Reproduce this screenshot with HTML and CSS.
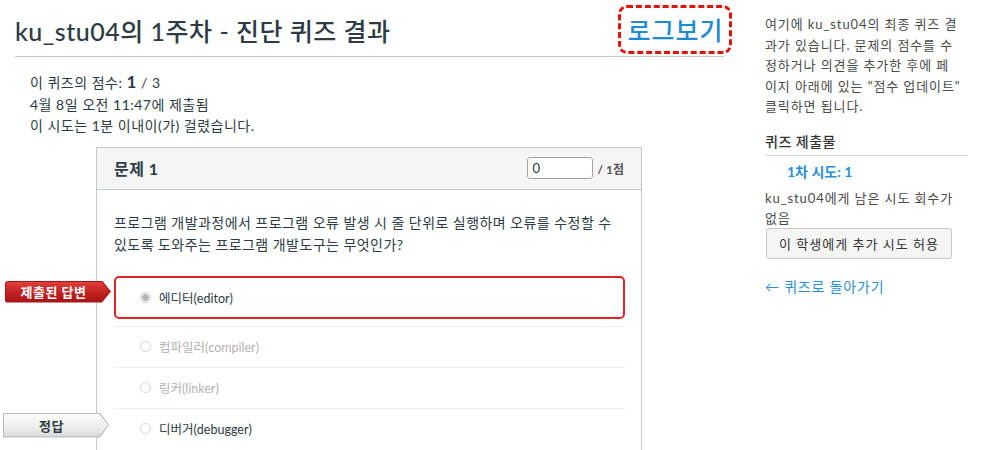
FILE: index.html
```html
<!DOCTYPE html>
<html lang="ko">
<head>
<meta charset="utf-8">
<title>퀴즈 결과</title>
<link rel="stylesheet" href="styles.css">
</head>
<body>
<div class="page">
  <main class="content">
    <header class="page-head">
      <h1 class="page-title">ku_stu04의 1주차 - 진단 퀴즈 결과</h1>
      <a class="log-link" href="#">로그보기</a>
    </header>

    <div class="quiz-info">
      <div>이 퀴즈의 점수: <b class="score">1</b> / 3</div>
      <div>4월 8일 오전 11:47에 제출됨</div>
      <div>이 시도는 1분 이내이(가) 걸렸습니다.</div>
    </div>

    <section class="question">
      <div class="q-head">
        <span class="q-title">문제 1</span>
        <span class="q-points"><input class="q-input" type="text" value="0"> <span class="q-max">/ 1점</span></span>
      </div>
      <div class="q-body">
        <p class="q-text">프로그램 개발과정에서 프로그램 오류 발생 시 줄 단위로 실행하며 오류를 수정할 수 있도록 도와주는 프로그램 개발도구는 무엇인가?</p>
        <div class="answers">
          <div class="answer answer-selected">
            <span class="tab tab-red"><span class="tab-inner">제출된 답변</span></span>
            <span class="radio radio-checked"></span>
            <span class="answer-text">에디터(editor)</span>
          </div>
          <div class="answer answer-muted">
            <span class="radio"></span>
            <span class="answer-text">컴파일러(compiler)</span>
          </div>
          <div class="answer answer-muted">
            <span class="radio"></span>
            <span class="answer-text">링커(linker)</span>
          </div>
          <div class="answer">
            <span class="tab tab-gray"><span class="tab-inner">정답</span></span>
            <span class="radio"></span>
            <span class="answer-text">디버거(debugger)</span>
          </div>
        </div>
      </div>
    </section>
  </main>

  <aside class="sidebar">
    <p class="side-intro">여기에 ku_stu04의 최종 퀴즈 결과가 있습니다. 문제의 점수를 수정하거나 의견을 추가한 후에 페이지 아래에 있는 "점수 업데이트" 클릭하면 됩니다.</p>
    <h2 class="side-heading">퀴즈 제출물</h2>
    <a class="attempt-link" href="#">1차 시도: 1</a>
    <p class="side-note">ku_stu04에게 남은 시도 회수가 없음</p>
    <button class="side-btn" type="button">이 학생에게 추가 시도 허용</button>
    <a class="back-link" href="#">← 퀴즈로 돌아가기</a>
  </aside>
</div>
</body>
</html>
```

FILE: styles.css
```css
html, body {
  margin: 0;
  padding: 0;
  overflow: hidden;
  background: #fff;
}

body {
  font-family: Lato, "Noto Sans CJK KR", sans-serif;
  color: #2d3b45;
}

.page {
  display: flex;
  align-items: flex-start;
  padding-left: 15px;
}

.content {
  width: 709px;
  flex: none;
}

/* header */
.page-head {
  height: 57px;
  box-sizing: border-box;
  border-bottom: 1px solid #c4c9cc;
  display: flex;
  align-items: center;
  justify-content: space-between;
}

.page-title {
  margin: 0;
  padding-top: 5px;
  font-size: 25px;
  line-height: 30px;
  font-weight: 500;
  color: #2d3b45;
  letter-spacing: 0.5px;
}

.log-link {
  margin-right: -8px;
  margin-top: 2px;
  width: 114px;
  height: 49px;
  box-sizing: border-box;
  border: 3px dashed #e3120b;
  border-radius: 9px;
  display: flex;
  align-items: center;
  justify-content: center;
  padding-left: 1px;
  font-size: 25px;
  font-weight: 500;
  letter-spacing: 1px;
  color: #1f8ad4;
  text-decoration: none;
}

/* info */
.quiz-info {
  margin: 14px 0 10px 15px;
  font-size: 14px;
  line-height: 21.5px;
  letter-spacing: 0.5px;
  color: #2d3b45;
}

.score {
  font-size: 17px;
  font-weight: 700;
}

/* question */
.question {
  margin-left: 81px;
  width: 546px;
  box-sizing: border-box;
  border: 1px solid #c4c9cc;
  border-bottom: none;
  padding-bottom: 60px;
}

.q-head {
  height: 41px;
  border-bottom: 1px solid #c4c9cc;
  background: #f5f5f5;
  display: flex;
  align-items: center;
  justify-content: space-between;
  padding: 0 17px;
}

.q-title {
  font-size: 16px;
  font-weight: 700;
  letter-spacing: 0.5px;
  color: #2d3b45;
}

.q-points {
  display: flex;
  align-items: center;
  gap: 4px;
}

.q-input {
  width: 66px;
  height: 22px;
  box-sizing: border-box;
  border: 1px solid #a5a5a5;
  border-radius: 3px;
  padding: 0 4px;
  font-family: Lato, "Noto Sans CJK KR", sans-serif;
  font-size: 13px;
  color: #2d3b45;
  background: #fff;
}

.q-max {
  font-size: 12px;
  font-weight: 700;
  color: #555;
}

.q-body {
  padding: 22px 16px 0 17px;
}

.q-text {
  margin: 0 0 20px;
  font-size: 14px;
  line-height: 22px;
  letter-spacing: 0.45px;
  color: #2d3b45;
}

.answer {
  position: relative;
  height: 40px;
  border-top: 1px solid #eceeef;
  display: flex;
  align-items: center;
  padding-left: 26px;
  font-size: 12.5px;
  color: #2d3b45;
}

.answer-selected {
  height: 39px;
  border: 2px solid #e02424;
  border-radius: 5px;
  padding-left: 24px;
  margin-bottom: 7px;
}

.answer-muted {
  color: #b3b3b3;
}

.radio {
  width: 11px;
  height: 11px;
  box-sizing: border-box;
  border: 1px solid #d5d5d5;
  border-radius: 50%;
  margin-right: 8px;
  background: #fff;
  flex: none;
}

.radio-checked {
  border-color: #d0d0d0;
  background: radial-gradient(circle, #b5b5b5 0 3px, #eee 3.5px);
}

/* tabs */
.tab {
  position: absolute;
  left: -111px;
  width: 106px;
  clip-path: polygon(0 0, calc(100% - 9px) 0, 100% 50%, calc(100% - 9px) 100%, 0 100%);
}

.tab-inner {
  position: absolute;
  inset: 1px;
  display: flex;
  align-items: center;
  justify-content: center;
  padding-right: 9px;
  font-size: 13px;
  font-weight: 700;
  letter-spacing: 0.5px;
  clip-path: polygon(0 0, calc(100% - 9px) 0, 100% 50%, calc(100% - 9px) 100%, 0 100%);
}

.tab-red {
  top: 3px;
  height: 22px;
  background: #a8141a;
  border-radius: 3px 0 0 3px;
}

.tab-red .tab-inner {
  color: #fff;
  background: linear-gradient(#e0403a, #c0201f 55%, #a81517);
}

.tab-gray {
  top: 4px;
  height: 25px;
  background: #b9b9b9;
}

.tab-gray .tab-inner {
  color: #2d3b45;
  background: linear-gradient(#fdfdfd, #ececec 60%, #d8d8d8);
}

/* sidebar */
.sidebar {
  margin-left: 41px;
  width: 196px;
  flex: none;
  font-size: 13px;
  letter-spacing: 0.9px;
  word-break: break-all;
  color: #4a4a4a;
}

.side-intro {
  margin: 14px 0 0;
  line-height: 20.5px;
}

.side-heading {
  margin: 15px 0 0;
  width: 203px;
  padding-bottom: 3px;
  border-bottom: 1px solid #d0d4d7;
  font-size: 14px;
  line-height: 20px;
  font-weight: 500;
  letter-spacing: 0.5px;
  color: #333;
}

.attempt-link {
  display: block;
  margin-top: 6px;
  padding-left: 22px;
  font-size: 14px;
  line-height: 20px;
  font-weight: 700;
  letter-spacing: 0;
  color: #2a8fd8;
  text-decoration: none;
}

.side-note {
  margin: 6px 0 0;
  line-height: 20px;
}

.side-btn {
  display: block;
  margin-left: 1px;
  width: 186px;
  height: 31px;
  border: 1px solid #c8c8c8;
  border-radius: 3px;
  background: #f5f5f5;
  font-family: Lato, "Noto Sans CJK KR", sans-serif;
  font-size: 13px;
  letter-spacing: 1px;
  color: #333;
  padding: 0;
}

.back-link {
  display: block;
  margin-top: 18px;
  font-size: 14px;
  line-height: 20px;
  letter-spacing: 0.8px;
  color: #2a8fd8;
  text-decoration: none;
}
```
